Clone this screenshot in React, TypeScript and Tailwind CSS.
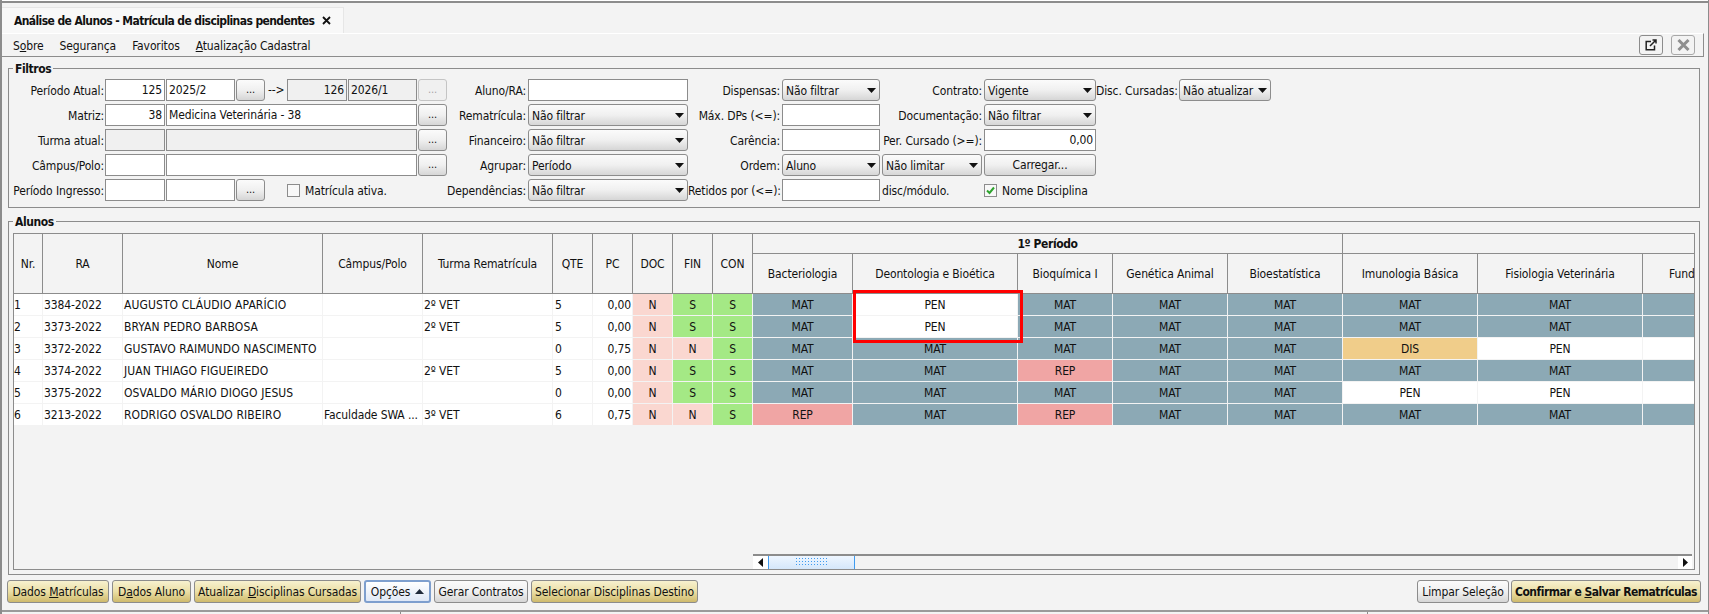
import { ReactNode } from "react";

const goldBtn =
  "border-[#8c8c8c] bg-linear-to-b from-[#f7f1cf] via-[#ebdfa6] to-[#cfba6c]";
const grayBtn =
  "border-[#8c8c8c] bg-linear-to-b from-[#fbfbfb] via-[#f0f0f0] to-[#d6d6d6]";

function Label({ w, children }: { w: string; children: ReactNode }) {
  return (
    <span className={`${w} shrink-0 pt-[1px] text-right whitespace-nowrap`}>
      {children}
    </span>
  );
}

function Field({
  w,
  value,
  right,
  disabled,
}: {
  w: string;
  value?: string;
  right?: boolean;
  disabled?: boolean;
}) {
  return (
    <div
      className={`${w} h-[22px] shrink-0 border border-[#8c8c8c] px-[2px] leading-[21px] whitespace-nowrap overflow-hidden ${
        disabled ? "bg-[#f0f0f0]" : "bg-white"
      } ${right ? "text-right" : ""}`}
    >
      {value}
    </div>
  );
}

function Dots({ disabled }: { disabled?: boolean }) {
  return (
    <button
      className={`w-[29px] h-[22px] shrink-0 rounded-[3px] border text-[11px] leading-[20px] ${
        disabled
          ? "border-[#c4c4c4] text-[#a5a5a5] bg-[#f0f0f0]"
          : "border-[#8c8c8c] bg-linear-to-b from-[#fbfbfb] via-[#f0f0f0] to-[#d6d6d6]"
      }`}
    >
      ...
    </button>
  );
}

function Arrow({ up }: { up?: boolean }) {
  return (
    <svg width="9" height="5" viewBox="0 0 9 5" className="shrink-0">
      <path d={up ? "M4.5 0L9 5H0Z" : "M0 0H9L4.5 5Z"} fill={up ? "#1f2a3a" : "#111"} />
    </svg>
  );
}

function Select({ w, value }: { w: string; value: string }) {
  return (
    <div
      className={`${w} h-[22px] shrink-0 flex items-center justify-between rounded-[3px] border pl-[3px] pr-[3px] ${grayBtn}`}
    >
      <span className="pt-[1px] whitespace-nowrap">{value}</span>
      <Arrow />
    </div>
  );
}

function Check({ checked }: { checked?: boolean }) {
  return (
    <span className="w-[13px] h-[13px] shrink-0 border border-[#8c8c8c] bg-[#f8f8f8] flex items-center justify-center">
      {checked && (
        <svg width="9" height="9" viewBox="0 0 9 9">
          <path d="M1 4.5L3.5 7L8 1.5" fill="none" stroke="#2ea32e" strokeWidth="2" />
        </svg>
      )}
    </span>
  );
}

function Group({
  title,
  className,
  children,
}: {
  title: string;
  className: string;
  children: ReactNode;
}) {
  return (
    <section className={`relative border border-[#8c8c8c] ${className}`}>
      <span className="absolute left-[4px] -top-[8px] bg-[#f3f3f3] px-[2px] font-bold tracking-[-0.4px] leading-[16px]">
        {title}
      </span>
      {children}
    </section>
  );
}

function Row({ children }: { children: ReactNode }) {
  return <div className="flex items-center h-[22px]">{children}</div>;
}

function Filters() {
  return (
    <Group title="Filtros" className="ml-[6px] w-[1692px] h-[140px] pt-[10px]">
      <div className="flex flex-col gap-[3px]">
        <Row>
          <Label w="w-[95px]">Período Atual:</Label>
          <div className="ml-[1px]"><Field w="w-[60px]" value="125" right /></div>
          <div className="ml-[1px]"><Field w="w-[69px]" value="2025/2" /></div>
          <div className="ml-[1px]"><Dots /></div>
          <span className="w-[22px] pl-[3px] whitespace-nowrap">--&gt;</span>
          <Field w="w-[60px]" value="126" right disabled />
          <div className="ml-[1px]"><Field w="w-[69px]" value="2026/1" disabled /></div>
          <div className="ml-[1px]"><Dots disabled /></div>
          <Label w="w-[79px]">Aluno/RA:</Label>
          <div className="ml-[2px]"><Field w="w-[160px]" /></div>
          <Label w="w-[92px]">Dispensas:</Label>
          <div className="ml-[2px]"><Select w="w-[98px]" value="Não filtrar" /></div>
          <Label w="w-[102px]">Contrato:</Label>
          <div className="ml-[2px]"><Select w="w-[112px]" value="Vigente" /></div>
          <Label w="w-[81px]">Disc. Cursadas:</Label>
          <div className="ml-[2px]"><Select w="w-[92px]" value="Não atualizar" /></div>
        </Row>
        <Row>
          <Label w="w-[95px]">Matriz:</Label>
          <div className="ml-[1px]"><Field w="w-[60px]" value="38" right /></div>
          <div className="ml-[1px]"><Field w="w-[251px]" value="Medicina Veterinária - 38" /></div>
          <div className="ml-[1px]"><Dots /></div>
          <Label w="w-[79px]">Rematrícula:</Label>
          <div className="ml-[2px]"><Select w="w-[160px]" value="Não filtrar" /></div>
          <Label w="w-[92px]">Máx. DPs (&lt;=):</Label>
          <div className="ml-[2px]"><Field w="w-[98px]" /></div>
          <Label w="w-[102px]">Documentação:</Label>
          <div className="ml-[2px]"><Select w="w-[112px]" value="Não filtrar" /></div>
        </Row>
        <Row>
          <Label w="w-[95px]">Turma atual:</Label>
          <div className="ml-[1px]"><Field w="w-[60px]" disabled /></div>
          <div className="ml-[1px]"><Field w="w-[251px]" disabled /></div>
          <div className="ml-[1px]"><Dots /></div>
          <Label w="w-[79px]">Financeiro:</Label>
          <div className="ml-[2px]"><Select w="w-[160px]" value="Não filtrar" /></div>
          <Label w="w-[92px]">Carência:</Label>
          <div className="ml-[2px]"><Field w="w-[98px]" /></div>
          <Label w="w-[102px]">Per. Cursado (&gt;=):</Label>
          <div className="ml-[2px]"><Field w="w-[112px]" value="0,00" right /></div>
        </Row>
        <Row>
          <Label w="w-[95px]">Câmpus/Polo:</Label>
          <div className="ml-[1px]"><Field w="w-[60px]" /></div>
          <div className="ml-[1px]"><Field w="w-[251px]" /></div>
          <div className="ml-[1px]"><Dots /></div>
          <Label w="w-[79px]">Agrupar:</Label>
          <div className="ml-[2px]"><Select w="w-[160px]" value="Período" /></div>
          <Label w="w-[92px]">Ordem:</Label>
          <div className="ml-[2px]"><Select w="w-[98px]" value="Aluno" /></div>
          <div className="ml-[2px]"><Select w="w-[100px]" value="Não limitar" /></div>
          <button className={`ml-[2px] w-[112px] h-[22px] rounded-[3px] border ${grayBtn}`}>
            Carregar...
          </button>
        </Row>
        <Row>
          <Label w="w-[95px]">Período Ingresso:</Label>
          <div className="ml-[1px]"><Field w="w-[60px]" /></div>
          <div className="ml-[1px]"><Field w="w-[69px]" /></div>
          <div className="ml-[1px]"><Dots /></div>
          <div className="ml-[22px] w-[160px] flex items-center gap-[5px]">
            <Check />
            <span className="pt-[1px] whitespace-nowrap">Matrícula ativa.</span>
          </div>
          <Label w="w-[79px]">Dependências:</Label>
          <div className="ml-[2px]"><Select w="w-[160px]" value="Não filtrar" /></div>
          <Label w="w-[92px]">Retidos por (&lt;=):</Label>
          <div className="ml-[2px]"><Field w="w-[98px]" /></div>
          <span className="ml-[2px] w-[100px] pt-[1px] whitespace-nowrap">disc/módulo.</span>
          <div className="ml-[2px] flex items-center gap-[5px]">
            <Check checked />
            <span className="pt-[1px] whitespace-nowrap">Nome Disciplina</span>
          </div>
        </Row>
      </div>
    </Group>
  );
}

type Aluno = {
  nr: number;
  ra: string;
  nome: string;
  campus: string;
  turma: string;
  qte: number;
  pc: string;
  fin: string;
  notas: string[];
};

const alunos: Aluno[] = [
  { nr: 1, ra: "3384-2022", nome: "AUGUSTO CLÁUDIO APARÍCIO", campus: "", turma: "2º VET", qte: 5, pc: "0,00", fin: "S", notas: ["MAT", "PEN", "MAT", "MAT", "MAT", "MAT", "MAT", "MAT"] },
  { nr: 2, ra: "3373-2022", nome: "BRYAN PEDRO BARBOSA", campus: "", turma: "2º VET", qte: 5, pc: "0,00", fin: "S", notas: ["MAT", "PEN", "MAT", "MAT", "MAT", "MAT", "MAT", "MAT"] },
  { nr: 3, ra: "3372-2022", nome: "GUSTAVO RAIMUNDO NASCIMENTO", campus: "", turma: "", qte: 0, pc: "0,75", fin: "N", notas: ["MAT", "MAT", "MAT", "MAT", "MAT", "DIS", "PEN", "PEN"] },
  { nr: 4, ra: "3374-2022", nome: "JUAN THIAGO FIGUEIREDO", campus: "", turma: "2º VET", qte: 5, pc: "0,00", fin: "S", notas: ["MAT", "MAT", "REP", "MAT", "MAT", "MAT", "MAT", "MAT"] },
  { nr: 5, ra: "3375-2022", nome: "OSVALDO MÁRIO DIOGO JESUS", campus: "", turma: "", qte: 0, pc: "0,00", fin: "S", notas: ["MAT", "MAT", "MAT", "MAT", "MAT", "PEN", "PEN", "PEN"] },
  { nr: 6, ra: "3213-2022", nome: "RODRIGO OSVALDO RIBEIRO", campus: "Faculdade SWA ...", turma: "3º VET", qte: 6, pc: "0,75", fin: "N", notas: ["REP", "MAT", "REP", "MAT", "MAT", "MAT", "MAT", "MAT"] },
];

const statusBg: Record<string, string> = {
  MAT: "bg-[#8ca9b5]",
  PEN: "bg-white",
  REP: "bg-[#f0a5a4]",
  DIS: "bg-[#f0cd8a]",
  N: "bg-[#fad7d0]",
  S: "bg-[#a4e985]",
};

const headCell =
  "flex items-center justify-center pt-[1px] border-r border-b border-[#8c8c8c] whitespace-nowrap overflow-hidden";
const spanCell = `${headCell} row-span-2`;
const bodyCell =
  "h-[22px] border-r border-b border-[#f3f3f3] leading-[22px] whitespace-nowrap overflow-hidden";

function Scrollbar() {
  return (
    <div className="mt-auto ml-[739px] w-[939px] h-[15px] flex border-t-2 border-[#8c8c8c]">
      <div className="w-[15px] bg-white flex items-center justify-center">
        <svg width="5" height="9" viewBox="0 0 5 9">
          <path d="M5 0V9L0 4.5Z" fill="#111" />
        </svg>
      </div>
      <div className="w-[87px] border-x border-[#3f9bf0] bg-linear-to-b from-[#eef6ff] to-[#d5e7fb] flex items-center justify-center">
        <svg width="32" height="9" viewBox="0 0 32 9">
          <defs>
            <pattern id="grip" width="3" height="3" patternUnits="userSpaceOnUse">
              <rect width="1" height="1" fill="#3f9bf0" />
            </pattern>
          </defs>
          <rect width="32" height="9" fill="url(#grip)" />
        </svg>
      </div>
      <div className="flex-1" />
      <div className="w-[14px] bg-white flex items-center justify-center">
        <svg width="5" height="9" viewBox="0 0 5 9">
          <path d="M0 0V9L5 4.5Z" fill="#111" />
        </svg>
      </div>
    </div>
  );
}

function AlunosTable() {
  return (
    <div className="relative ml-[4px] mt-[11px] w-[1682px] h-[337px] border border-[#8c8c8c] overflow-hidden flex flex-col">
      <div className="grid grid-cols-[29px_80px_200px_100px_130px_40px_40px_40px_40px_40px_100px_165px_95px_115px_115px_135px_165px_52px] auto-rows-min w-max">
        <div className={spanCell}>Nr.</div>
        <div className={spanCell}>RA</div>
        <div className={spanCell}>Nome</div>
        <div className={spanCell}>Câmpus/Polo</div>
        <div className={spanCell}>Turma Rematrícula</div>
        <div className={spanCell}>QTE</div>
        <div className={spanCell}>PC</div>
        <div className={spanCell}>DOC</div>
        <div className={spanCell}>FIN</div>
        <div className={spanCell}>CON</div>
        <div className={`${headCell} h-[20px] col-span-5 font-bold tracking-[-0.4px]`}>1º Período</div>
        <div className={`${headCell} h-[20px] col-span-3`} />
        <div className={`${headCell} h-[40px]`}>Bacteriologia</div>
        <div className={`${headCell} h-[40px]`}>Deontologia e Bioética</div>
        <div className={`${headCell} h-[40px]`}>Bioquímica I</div>
        <div className={`${headCell} h-[40px]`}>Genética Animal</div>
        <div className={`${headCell} h-[40px]`}>Bioestatística</div>
        <div className={`${headCell} h-[40px]`}>Imunologia Básica</div>
        <div className={`${headCell} h-[40px]`}>Fisiologia Veterinária</div>
        <div className={`${headCell} h-[40px] !justify-start pl-[26px]`}>Fund</div>

        {alunos.map((a) => (
          <div key={a.nr} className="contents">
            <div className={`${bodyCell} bg-white`}>{a.nr}</div>
            <div className={`${bodyCell} bg-white pl-[1px]`}>{a.ra}</div>
            <div className={`${bodyCell} bg-white pl-[1px] tracking-[0.1px]`}>{a.nome}</div>
            <div className={`${bodyCell} bg-white pl-[1px]`}>{a.campus}</div>
            <div className={`${bodyCell} bg-white pl-[1px]`}>{a.turma}</div>
            <div className={`${bodyCell} bg-white pl-[2px]`}>{a.qte}</div>
            <div className={`${bodyCell} bg-white pr-[1px] text-right`}>{a.pc}</div>
            <div className={`${bodyCell} ${statusBg.N} text-center`}>N</div>
            <div className={`${bodyCell} ${statusBg[a.fin]} text-center`}>{a.fin}</div>
            <div className={`${bodyCell} ${statusBg.S} text-center`}>S</div>
            {a.notas.map((n, i) => (
              <div key={i} className={`${bodyCell} ${statusBg[n]} text-center`}>
                {i < 7 ? n : ""}
              </div>
            ))}
          </div>
        ))}
      </div>
      <Scrollbar />
      {/* destaque vermelho nas duas primeiras linhas */}
      <div className="absolute left-[839px] top-[56px] w-[170px] h-[53px] border-[3px] border-[#ff0000]" />
    </div>
  );
}

function ActionButton({
  className,
  style,
  children,
}: {
  className: string;
  style: string;
  children: ReactNode;
}) {
  return (
    <button
      className={`${className} h-[23px] shrink-0 rounded-[3px] border whitespace-nowrap ${style}`}
    >
      {children}
    </button>
  );
}

export default function App() {
  return (
    <div className="relative w-[1709px] h-[614px] overflow-hidden bg-[#f3f3f3] border-l-2 border-r border-[#8c8c8c] text-[12px] tracking-[-0.12px] text-[#111] font-['DejaVu_Sans_Condensed','Liberation_Sans',sans-serif] flex flex-col">
      <div className="h-[3px] shrink-0 border-b-2 border-[#8c8c8c] bg-white" />

      <div className="h-[30px] shrink-0 flex items-end">
        <div className="w-[342px] h-[26px] flex items-center pl-[12px] gap-[8px] bg-[#f8f8f8] border-t border-r border-[#e6e6e6] font-bold tracking-[-0.6px]">
          <span className="whitespace-nowrap">Análise de Alunos - Matrícula de disciplinas pendentes</span>
          <svg width="9" height="9" viewBox="0 0 9 9" className="shrink-0">
            <path d="M1 1L8 8M8 1L1 8" stroke="#111" strokeWidth="1.8" />
          </svg>
        </div>
      </div>

      <div className="w-[1702px] h-[24px] shrink-0 flex items-center border-t border-white border-b-[#8c8c8c] border-b border-r-[#8c8c8c] border-r pl-[11px] pr-[8px] gap-[16px]">
        <span className="pt-[1px]">S<span className="underline">o</span>bre</span>
        <span className="pt-[1px]">Segurança</span>
        <span className="pt-[1px]">Favoritos</span>
        <span className="pt-[1px]"><span className="underline">A</span>tualização Cadastral</span>
        <button className="ml-auto w-[24px] h-[20px] rounded-[3px] border border-[#8c8c8c] flex items-center justify-center">
          <svg width="12" height="12" viewBox="0 0 12 12" fill="none" stroke="#222" strokeWidth="1.5">
            <path d="M6 2.5H1.2V10.8H9.5V6.5" />
            <path d="M5 7L10.5 1.5M7.5 1H11V4.5" />
          </svg>
        </button>
        <button className="-ml-[8px] w-[24px] h-[20px] rounded-[3px] border border-[#a8a8a8] flex items-center justify-center">
          <svg width="13" height="12" viewBox="0 0 13 12" fill="none" stroke="#8f8f8f" strokeWidth="3">
            <path d="M1.5 1L11.5 11M11.5 1L1.5 11" />
          </svg>
        </button>
      </div>

      <div className="mt-[11px]">
        <Filters />
      </div>

      <div className="mt-[13px]">
        <Group title="Alunos" className="ml-[6px] w-[1692px] h-[354px]">
          <AlunosTable />
        </Group>
      </div>

      <div className="mt-[5px] flex pl-[5px] pr-[7px]">
        <ActionButton className="w-[102px]" style={goldBtn}>
          Dados <span className="underline">M</span>atrículas
        </ActionButton>
        <ActionButton className="ml-[3px] w-[79px]" style={goldBtn}>
          D<span className="underline">a</span>dos Aluno
        </ActionButton>
        <ActionButton className="ml-[3px] w-[167px]" style={goldBtn}>
          Atualizar <span className="underline">D</span>isciplinas Cursadas
        </ActionButton>
        <button className="ml-[3px] w-[67px] h-[23px] shrink-0 flex items-center justify-center gap-[5px] rounded-[3px] border-2 border-[#7e9fce] bg-linear-to-b from-white to-[#dfe8f6]">
          Opções
          <Arrow up />
        </button>
        <ActionButton className="ml-[3px] w-[94px]" style={grayBtn}>
          Gerar Contratos
        </ActionButton>
        <ActionButton className="ml-[3px] w-[167px]" style={goldBtn}>
          Selecionar Disciplinas Destino
        </ActionButton>
        <ActionButton className="ml-auto w-[92px]" style={grayBtn}>
          Limpar Seleção
        </ActionButton>
        <ActionButton className="ml-[2px] w-[190px] font-bold tracking-[-0.5px]" style={goldBtn}>
          Confirmar e <span className="underline">S</span>alvar Rematrículas
        </ActionButton>
      </div>

      <div className="mt-[7px] flex-1 flex border-t-2 border-[#9a9a9a]">
        <div className="w-[399px] border-r border-[#8c8c8c]" />
        <div className="w-[967px] border-r border-[#8c8c8c]" />
      </div>
    </div>
  );
}
